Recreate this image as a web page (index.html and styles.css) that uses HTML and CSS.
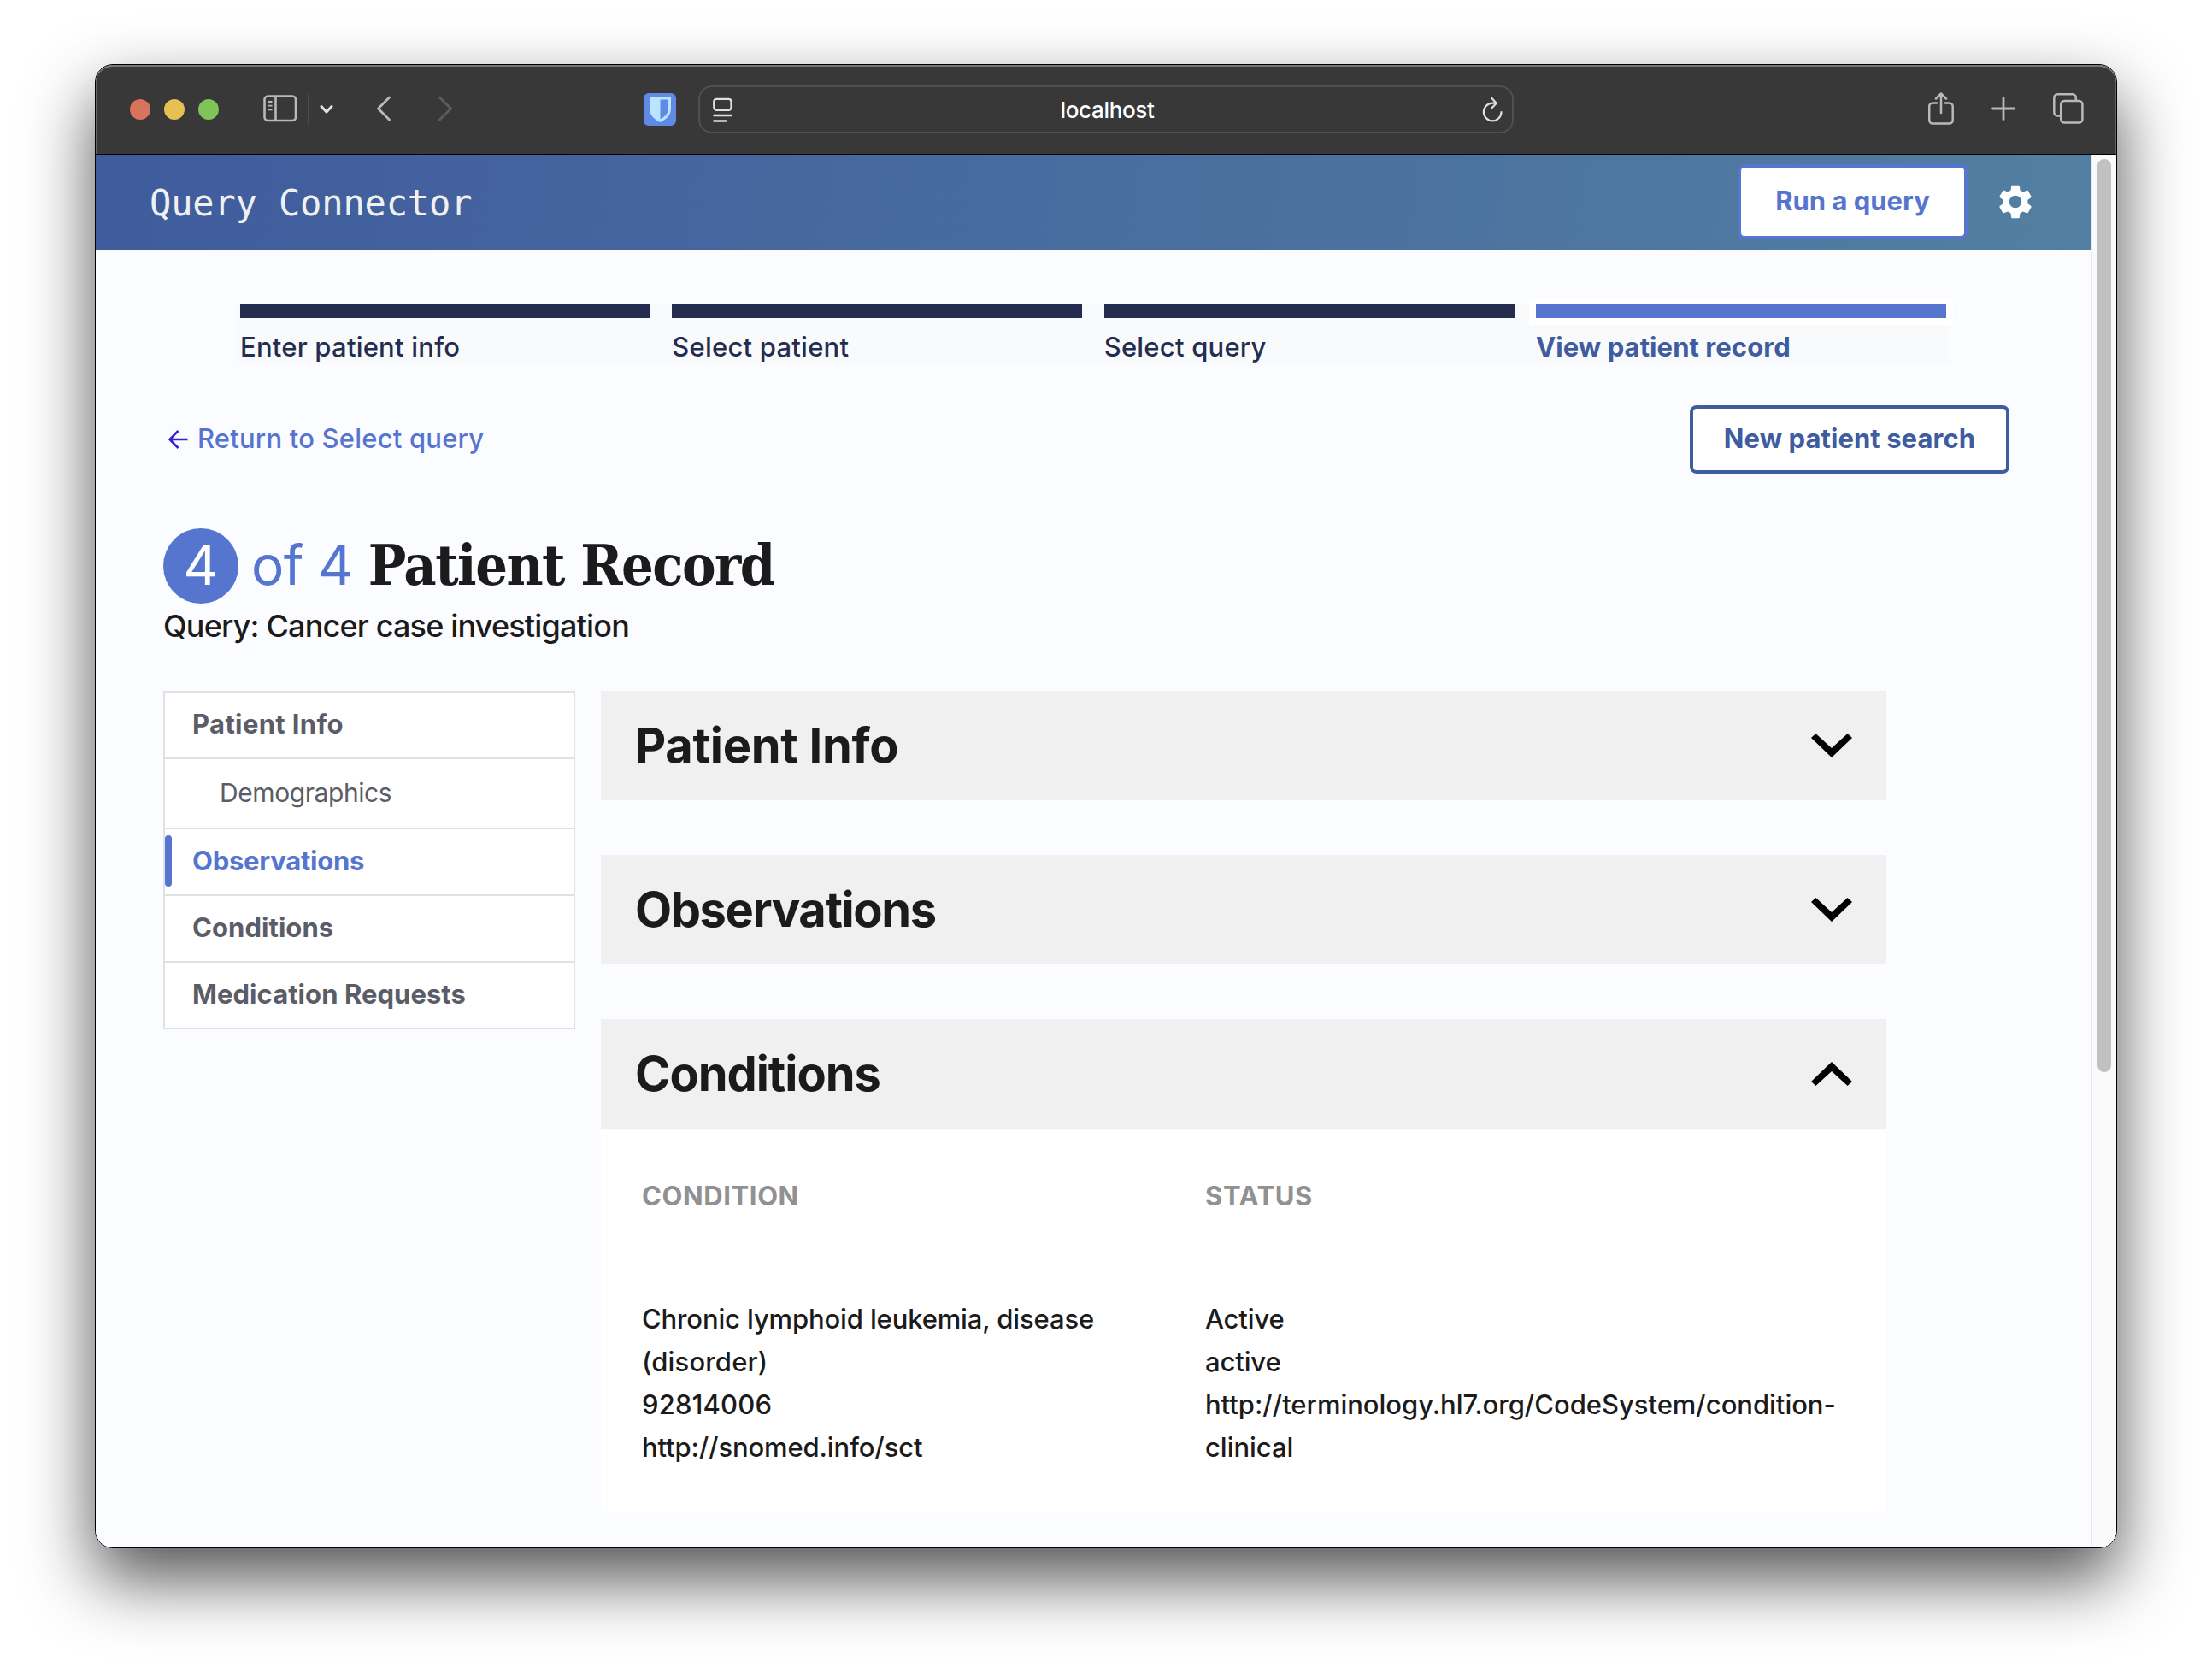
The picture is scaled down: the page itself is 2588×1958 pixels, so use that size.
FILE: index.html
```html
<!DOCTYPE html>
<html lang="en">
<head>
<meta charset="utf-8">
<title>Query Connector</title>
<link rel="stylesheet" href="styles.css">
</head>
<body>
<div class="window">
  <div class="toolbar">
    <div class="lights"><i class="light red"></i><i class="light yellow"></i><i class="light green"></i></div>
    <svg class="ic-sidebar" width="40" height="32" viewBox="0 0 40 32" fill="none" stroke="#b9b9b9" stroke-width="2.6"><rect x="1.5" y="1.5" width="36.5" height="28.5" rx="4"/><path d="M14.5 1.5v28.5"/><path d="M5 8h5.5M5 12.7h5.5M5 17.4h5.5" stroke-width="1.8"/></svg>
    <i class="divider"></i>
    <svg class="ic-down" width="16" height="12" viewBox="0 0 16 12" fill="none" stroke="#e2e2e2" stroke-width="3" stroke-linecap="round" stroke-linejoin="round"><path d="M2 2.5l6 6.5 6-6.5"/></svg>
    <svg class="ic-back" width="18" height="30" viewBox="0 0 18 30" fill="none" stroke="#b9b9b9" stroke-width="2.8" stroke-linecap="round" stroke-linejoin="round"><path d="M15.5 2L2.5 15l13 13"/></svg>
    <svg class="ic-fwd" width="18" height="30" viewBox="0 0 18 30" fill="none" stroke="#5c5c5c" stroke-width="2.8" stroke-linecap="round" stroke-linejoin="round"><path d="M2.5 2l13 13-13 13"/></svg>
    <svg class="ic-shield" width="38" height="38" viewBox="0 0 38 38"><rect width="38" height="38" rx="6" fill="#5f8be6"/><path d="M7 4h25v14c0 8-6 13-12.500 16C13 31 7 26 7 18z" fill="#b9e5ff"/><path d="M19.500 7.500H29V18c0 6-4.500 9.500-9.500 12.500z" fill="#5f8be6"/></svg>
    <div class="address">
      <svg width="23" height="29" viewBox="0 0 23 29" fill="none" stroke="#e0e0e0" stroke-width="2.300" stroke-linecap="round"><rect x="1.300" y="1.800" width="20.200" height="13" rx="3"/><path d="M1.300 21h20.200M1.300 27.500h14"/></svg>
      <span class="host">localhost</span>
      <svg width="24" height="30" viewBox="0 0 24 30" fill="none" stroke="#e0e0e0" stroke-width="2.200" stroke-linecap="round" stroke-linejoin="round"><path d="M22.500 18a10.300 10.300 0 1 1-10.300-10.300h4"/><path d="M11.500 2l5.200 5.700-5.200 5.500"/></svg>
    </div>
    <svg class="ic-share" width="30" height="38" viewBox="0 0 30 38" fill="none" stroke="#b9b9b9" stroke-width="2.500" stroke-linecap="round" stroke-linejoin="round"><path d="M10 12.500H5.200a4 4 0 0 0-4 4v16a4 4 0 0 0 4 4h19.500a4 4 0 0 0 4-4v-16a4 4 0 0 0-4-4H20"/><path d="M15 24V2M9 7.500l6-6 6 6"/></svg>
    <svg class="ic-plus" width="28" height="28" viewBox="0 0 28 28" fill="none" stroke="#b9b9b9" stroke-width="2.800" stroke-linecap="round"><path d="M14 1.500v25M1.500 14h25"/></svg>
    <svg class="ic-tabs" width="36" height="36" viewBox="0 0 36 36" fill="none" stroke="#b9b9b9" stroke-width="2.500" stroke-linejoin="round"><rect x="9.200" y="9" width="25.200" height="25.500" rx="4"/><path d="M9 26.500H5.300a4 4 0 0 1-4-4V5.300a4 4 0 0 1 4-4h17.500a4 4 0 0 1 4 4V9"/></svg>
  </div>
  <div class="viewport">
    <div class="page">
      <header class="header">
        <span class="brand">Query Connector</span>
        <span class="run">Run a query</span>
        <svg class="gear" width="48" height="48" viewBox="0 0 24 24" fill="#fff"><path d="M19.140 12.940c.04-.3.060-.61.060-.94 0-.32-.02-.64-.07-.94l2.030-1.580c.18-.14.230-.41.120-.61l-1.920-3.320c-.12-.22-.37-.29-.59-.22l-2.390.96c-.5-.38-1.030-.7-1.620-.94l-.36-2.540c-.04-.24-.24-.41-.48-.41h-3.840c-.24 0-.43.170-.47.410l-.36 2.540c-.59.240-1.130.570-1.620.940l-2.390-.96c-.22-.08-.47 0-.59.220L2.740 8.870c-.12.210-.08.470.120.610l2.030 1.580c-.05.300-.09.630-.09.940s.02.640.07.940l-2.030 1.580c-.18.140-.23.410-.12.610l1.920 3.320c.12.220.37.290.59.220l2.390-.96c.5.380 1.030.7 1.620.940l.36 2.540c.05.240.24.410.480.410h3.840c.24 0 .44-.17.470-.41l.36-2.540c.59-.24 1.130-.56 1.620-.94l2.390.96c.22.080.47 0 .59-.22l1.920-3.320c.12-.22.070-.47-.12-.61l-2.010-1.580zM12 15.600c-1.980 0-3.600-1.620-3.600-3.600s1.620-3.600 3.600-3.600 3.600 1.620 3.600 3.600-1.620 3.600-3.600 3.600z"/></svg>
      </header>
      <div class="steps">
        <div class="step">Enter patient info</div>
        <div class="step">Select patient</div>
        <div class="step">Select query</div>
        <div class="step current">View patient record</div>
      </div>
      <div class="actions">
        <svg width="24" height="24" viewBox="0 0 24 24" fill="none" stroke="#3a1ddb" stroke-width="2.600"><path d="M22.500 12H2.500M11.500 2l-10 10 10 10"/></svg>
        <span class="return">Return to Select query</span>
        <span class="new">New patient search</span>
      </div>
      <h1 class="title"><span class="num">4</span><span class="of">of 4</span><span class="name">Patient Record</span></h1>
      <p class="query">Query: Cancer case investigation</p>
      <div class="record">
        <nav class="sidenav">
          <div class="item wide">Patient Info</div>
          <div class="item sub">Demographics</div>
          <div class="item active">Observations</div>
          <div class="item">Conditions</div>
          <div class="item">Medication Requests</div>
        </nav>
        <div class="sections">
          <div class="bar">
            <span class="heading">Patient Info</span>
            <svg width="48" height="28" viewBox="0 0 48 28"><path d="M0 5L5.400 0 24 17.100 42.600 0 48 5 24 28z"/></svg>
          </div>
          <div class="bar">
            <span class="heading tight">Observations</span>
            <svg width="48" height="28" viewBox="0 0 48 28"><path d="M0 5L5.400 0 24 17.100 42.600 0 48 5 24 28z"/></svg>
          </div>
          <div class="open">
            <div class="bar">
              <span class="heading snug">Conditions</span>
              <svg width="48" height="28" viewBox="0 0 48 28"><path d="M0 23L5.400 28 24 10.900 42.600 28 48 23 24 0z"/></svg>
            </div>
            <div class="table">
              <div class="th">CONDITION</div>
              <div class="th">STATUS</div>
              <div class="td">Chronic lymphoid leukemia, disease<br><span class="aside">(disorder)</span><br><span class="aside">92814006</span><br>http://snomed.info/sct</div>
              <div class="td">Active<br>active<br><span class="link">http://terminology.hl7.org/CodeSystem/condition-</span><br><span class="link">clinical</span></div>
            </div>
          </div>
        </div>
      </div>
    </div>
    <div class="scroll"><i class="thumb"></i></div>
  </div>
</div>
</body>
</html>
```
FILE: styles.css
```css
* { box-sizing: border-box; }
body {
  margin: 0;
  height: 1958px;
  padding: 75px 111px;
  background: #fff;
  font-family: Inter, "Liberation Sans", sans-serif;
  font-size: 31px;
  font-weight: 450;
  color: #1b1b1b;
}
svg, i { display: block; flex: none; }
span { white-space: nowrap; }

.window {
  width: 2366px;
  height: 1736px;
  border: 1px solid #000;
  border-radius: 21px;
  overflow: hidden;
  box-shadow: 0 36px 80px rgba(0, 0, 0, .68);
}
.toolbar {
  display: flex;
  align-items: center;
  height: 105px;
  padding: 0 38px 0 40px;
  background: #383838;
  border-bottom: 1px solid #000;
  border-radius: 20px 20px 0 0;
  box-shadow: inset 0 2px #757773, inset 1px 0 #666, inset -1px 0 #666;
}
.lights { display: flex; gap: 16px; }
.light { width: 24px; height: 24px; border-radius: 50%; }
.red { background: #d8735d; }
.yellow { background: #e6c052; }
.green { background: #7fc359; }
.ic-sidebar { margin: 0 0 3px 52px; }
.divider { width: 2px; height: 36px; margin-left: 12px; background: #4a4a4a; }
.ic-down { margin-left: 12px; }
.ic-back { margin: 0 0 2px 50px; }
.ic-fwd { margin: 0 0 2px 54px; }
.ic-shield { margin-left: 223px; }
.address {
  display: flex;
  align-items: center;
  justify-content: space-between;
  width: 954px;
  height: 56px;
  margin-left: 26px;
  padding: 0 11px 0 15px;
  border: 2px solid #505050;
  border-radius: 16px;
}
.host { font-size: 26px; letter-spacing: -.35px; color: #fff; }
.ic-share { margin: 0 0 3px auto; }
.ic-plus, .ic-tabs { margin: 0 0 3px 44px; }

.viewport { display: flex; height: 1629px; background: #fbfcff; }
.page { width: 2334px; }
.scroll { width: 30px; padding: 5px 6px; border-left: 2px solid #e8e8e8; background: #fafafa; }
.thumb { width: 16px; height: 1068px; border-radius: 8px; background: #c1c1c1; }

.header {
  display: flex;
  align-items: center;
  height: 111px;
  padding: 0 64px 0 63px;
  background: linear-gradient(100deg, #3f5b9d, #527fa1);
}
.brand { padding-top: 2px; font: 42px "DejaVu Sans Mono", monospace; letter-spacing: -.13px; color: #f0f0f0; }
.run, .new {
  display: flex;
  align-items: center;
  justify-content: center;
  padding-bottom: 3px;
  border: 4px solid;
  border-radius: 8px;
  background: #fff;
  font-weight: 700;
}
.run { width: 269px; height: 88px; margin: 0 0 1px auto; color: #5575cf; }
.gear { margin: 0 0 2px 32px; }

.steps {
  display: grid;
  grid-template-columns: repeat(4, 480px);
  justify-content: space-between;
  width: 2001px;
  height: 70px;
  margin: 64px 0 0 167px;
  padding: 0 3px 0 2px;
  background: #f9fafc;
  line-height: 34px;
  letter-spacing: .22px;
  color: #242d4f;
}
.step::before { content: ""; display: block; height: 16px; margin-bottom: 17px; background: #242d4f; }
.current { color: #3e5c9f; font-weight: 700; letter-spacing: .08px; }
.current::before { background: #5575cf; box-shadow: 0 0 0 8px #fff; }

.actions { display: flex; align-items: center; height: 80px; margin: 48px 95px 0 85px; }
.return { margin: 0 0 3px 10px; letter-spacing: .2px; color: #5575cf; }
.new { width: 374px; height: 80px; margin-left: auto; letter-spacing: .08px; color: #3e5c9f; }

.title { display: flex; align-items: center; height: 88px; margin: 64px 0 0 79px; font-weight: 400; font-size: 64px; }
.num { width: 88px; height: 88px; line-height: 85px; border-radius: 50%; background: #5575cf; color: #fff; text-align: center; }
.of { margin: 0 0 3px 15px; letter-spacing: -.65px; color: #5575cf; }
.name { margin: 0 0 3px 18px; font: 700 66px "DejaVu Serif Condensed", "DejaVu Serif", serif; letter-spacing: -1.5px; }
.query { margin: 4px 0 0 79px; font-size: 36px; line-height: 44px; letter-spacing: -.82px; }

.record { display: flex; align-items: flex-start; gap: 30px; margin: 54px 0 0 79px; }
.sidenav { width: 482px; border: 2px solid #dfe1e2; border-top: 0; background: #fff; }
.item {
  display: flex;
  align-items: center;
  height: 78px;
  padding: 0 0 4px 32px;
  border-top: 2px solid #dfe1e2;
  font-weight: 700;
  letter-spacing: .06px;
  color: #5a5d67;
}
.wide { letter-spacing: .36px; }
.sub { height: 82px; padding: 0 0 2px 64px; font-size: 30px; font-weight: 400; letter-spacing: -.43px; }
.active { padding-left: 0; color: #5575cf; letter-spacing: -.24px; }
.active::before { content: ""; width: 8px; height: 60px; margin: 2px 24px 0 0; border-radius: 4px; background: #5575cf; }

.sections { display: grid; gap: 64px; width: 1504px; }
.bar {
  display: flex;
  align-items: center;
  justify-content: space-between;
  height: 128px;
  padding: 0 40px;
  background: #f0f0f0;
}
.heading { font-size: 56px; font-weight: 700; letter-spacing: -.28px; }
.tight { letter-spacing: -1.42px; }
.snug { letter-spacing: -1.05px; }
.table {
  display: grid;
  grid-template-columns: 659px 1fr;
  align-content: start;
  row-gap: 94px;
  height: 449px;
  padding: 52px 48px 0;
  border-top: 2px solid #fcfcfd;
  background: #fff;
  line-height: 50px;
}
.td { letter-spacing: -.14px; }
.th { font-weight: 700; letter-spacing: .6px; color: #919191; }
.aside { letter-spacing: .15px; }
.link { letter-spacing: -.03px; }
```
